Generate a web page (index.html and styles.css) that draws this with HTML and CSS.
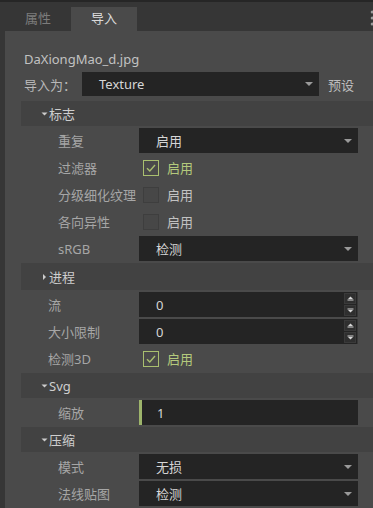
FILE: index.html
```html
<!DOCTYPE html>
<html lang="zh">
<head>
<meta charset="utf-8">
<link rel="stylesheet" href="styles.css">
</head>
<body>
<div class="topline"></div>
<div class="tabbar">
  <div class="tab">属性</div>
  <div class="tab active">导入</div>
  <svg class="dots" width="3" height="16" viewBox="0 0 3 16"><circle cx="2.2" cy="2" r="1.5"/><circle cx="2.2" cy="8" r="1.5"/><circle cx="2.2" cy="14" r="1.5"/></svg>
</div>
<div class="panel">
  <div class="filename">DaXiongMao_d.jpg</div>
  <div class="import-row">
    <span class="import-label">导入为：</span>
    <div class="select main"><span>Texture</span><svg class="drop" width="8" height="4" viewBox="0 0 8 4"><path d="M0 0H8L4 4Z"/></svg></div>
    <span class="preset">预设</span>
  </div>
  <div class="inspector">
    <div class="section-head"><svg class="arrow" width="8" height="8" viewBox="0 0 8 8"><path d="M0.5 2.5H6.5L3.5 5.5Z"/></svg>标志</div>
    <div class="prop"><span class="label">重复</span><div class="select"><span>启用</span><svg class="drop" width="8" height="4" viewBox="0 0 8 4"><path d="M0 0H8L4 4Z"/></svg></div></div>
    <div class="prop"><span class="label">过滤器</span><div class="check on"><span class="box"><svg width="12" height="12" viewBox="0 0 12 12"><path d="M2 6.2L4.8 9L10 3" fill="none" stroke-width="1.4"/></svg></span><span>启用</span></div></div>
    <div class="prop"><span class="label">分级细化纹理</span><div class="check"><span class="box"></span><span>启用</span></div></div>
    <div class="prop"><span class="label">各向异性</span><div class="check"><span class="box"></span><span>启用</span></div></div>
    <div class="prop"><span class="label">sRGB</span><div class="select"><span>检测</span><svg class="drop" width="8" height="4" viewBox="0 0 8 4"><path d="M0 0H8L4 4Z"/></svg></div></div>

    <div class="section-head tall"><svg class="arrow" width="8" height="8" viewBox="0 0 8 8"><path d="M2 1V7L5 4Z"/></svg>进程</div>
    <div class="prop shallow"><span class="label">流</span><div class="spin"><span>0</span><div class="spin-btns"><span class="sbtn"><svg width="7" height="5" viewBox="0 0 7 5"><path d="M3.5 0.5L6 3H1Z"/><rect x="0.5" y="3.5" width="6" height="1"/></svg></span><span class="sbtn"><svg width="7" height="5" viewBox="0 0 7 5"><rect x="0.5" y="0.5" width="6" height="1"/><path d="M1 2H6L3.5 4.5Z"/></svg></span></div></div></div>
    <div class="prop shallow"><span class="label">大小限制</span><div class="spin"><span>0</span><div class="spin-btns"><span class="sbtn"><svg width="7" height="5" viewBox="0 0 7 5"><path d="M3.5 0.5L6 3H1Z"/><rect x="0.5" y="3.5" width="6" height="1"/></svg></span><span class="sbtn"><svg width="7" height="5" viewBox="0 0 7 5"><rect x="0.5" y="0.5" width="6" height="1"/><path d="M1 2H6L3.5 4.5Z"/></svg></span></div></div></div>
    <div class="prop shallow"><span class="label">检测3D</span><div class="check on"><span class="box"><svg width="12" height="12" viewBox="0 0 12 12"><path d="M2 6.2L4.8 9L10 3" fill="none" stroke-width="1.4"/></svg></span><span>启用</span></div></div>

    <div class="section-head"><svg class="arrow" width="8" height="8" viewBox="0 0 8 8"><path d="M0.5 2.5H6.5L3.5 5.5Z"/></svg>Svg</div>
    <div class="prop"><span class="label">缩放</span><div class="field edit"><span>1</span></div></div>

    <div class="section-head"><svg class="arrow" width="8" height="8" viewBox="0 0 8 8"><path d="M0.5 2.5H6.5L3.5 5.5Z"/></svg>压缩</div>
    <div class="prop"><span class="label">模式</span><div class="select"><span>无损</span><svg class="drop" width="8" height="4" viewBox="0 0 8 4"><path d="M0 0H8L4 4Z"/></svg></div></div>
    <div class="prop"><span class="label">法线贴图</span><div class="select"><span>检测</span><svg class="drop" width="8" height="4" viewBox="0 0 8 4"><path d="M0 0H8L4 4Z"/></svg></div></div>
  </div>
</div>
</body>
</html>
```
FILE: styles.css
```css
html, body {
  margin: 0;
  padding: 0;
}
body {
  width: 373px;
  height: 508px;
  overflow: hidden;
  background: #363636;
  font-family: "Noto Sans", "Noto Sans CJK SC", sans-serif;
  font-size: 13px;
  color: #c4c4c4;
}
.topline {
  height: 2px;
  background: #262626;
}
.tabbar {
  height: 29px;
  display: flex;
  align-items: flex-end;
  padding-left: 5px;
  position: relative;
}
.tab {
  width: 66px;
  height: 24px;
  display: flex;
  align-items: center;
  justify-content: center;
  color: #7c7c7c;
  line-height: 1;
  padding-bottom: 1px;
  box-sizing: border-box;
}
.tab.active {
  background: #4a4a4a;
  color: #dadada;
}
.dots {
  margin-left: auto;
  align-self: flex-start;
  margin-top: 8px;
  fill: #9c9c9c;
}
.panel {
  margin-left: 5px;
  background: #4a4a4a;
  height: 477px;
  padding-top: 16px;
  box-sizing: border-box;
}
.filename {
  height: 24px;
  line-height: 24px;
  padding-left: 19px;
  color: #c2c2c2;
}
.import-row {
  margin-top: 1px;
  height: 24px;
  display: flex;
  align-items: center;
  padding-left: 19px;
}
.import-label {
  width: 58px;
  color: #b8b8b8;
}
.preset {
  margin-left: 9px;
  color: #bdbdbd;
}
.select {
  height: 25px;
  background: #242424;
  display: flex;
  align-items: center;
  padding-left: 17px;
  padding-right: 6px;
  box-sizing: border-box;
  color: #d6d6d6;
}
.select.main {
  width: 237px;
  height: 24px;
}
.drop {
  margin-left: auto;
  fill: #9a9a9a;
}
.inspector {
  margin-top: 5px;
  margin-left: 16px;
  display: flex;
  flex-direction: column;
  gap: 2px;
}
.section-head {
  height: 25px;
  background: #424242;
  display: flex;
  align-items: center;
  padding-left: 20px;
  color: #cecece;
}
.section-head.tall {
  height: 27px;
}
.arrow {
  fill: #cccccc;
  margin-right: 0;
}
.prop {
  display: grid;
  grid-template-columns: 118px 219px;
  height: 25px;
  align-items: center;
}
.label {
  padding-left: 37px;
  color: #a6a6a6;
  white-space: nowrap;
}
.prop.shallow .label {
  padding-left: 27px;
}
.check {
  display: flex;
  align-items: center;
  padding-left: 4px;
  color: #c2c2c2;
}
.box {
  width: 16px;
  height: 16px;
  box-sizing: border-box;
  border: 1px solid #3e3e3e;
  background: #474747;
  margin-right: 8px;
  display: flex;
  align-items: center;
  justify-content: center;
}
.check.on {
  color: #b4c97c;
}
.check.on .box {
  border-color: #a9bf6f;
  background: transparent;
}
.check.on svg {
  stroke: #a9bf6f;
}
.spin {
  height: 25px;
  background: #242424;
  display: flex;
  align-items: center;
  padding-left: 17px;
  color: #d6d6d6;
}
.spin-btns {
  margin-left: auto;
  height: 25px;
  display: flex;
  flex-direction: column;
  gap: 1px;
  padding: 1px 1px 1px 0;
  box-sizing: border-box;
  border-right: 1px solid #383838;
}
.sbtn {
  width: 12px;
  height: 11px;
  background: #2f2f2f;
  box-sizing: border-box;
  border: 1px solid #3a3a3a;
  display: flex;
  align-items: center;
  justify-content: center;
  fill: #d8d8d8;
}
.field {
  height: 25px;
  background: #242424;
  display: flex;
  align-items: center;
  color: #d6d6d6;
}
.field.edit {
  border-left: 3px solid #9db46b;
  padding-left: 15px;
}
```
